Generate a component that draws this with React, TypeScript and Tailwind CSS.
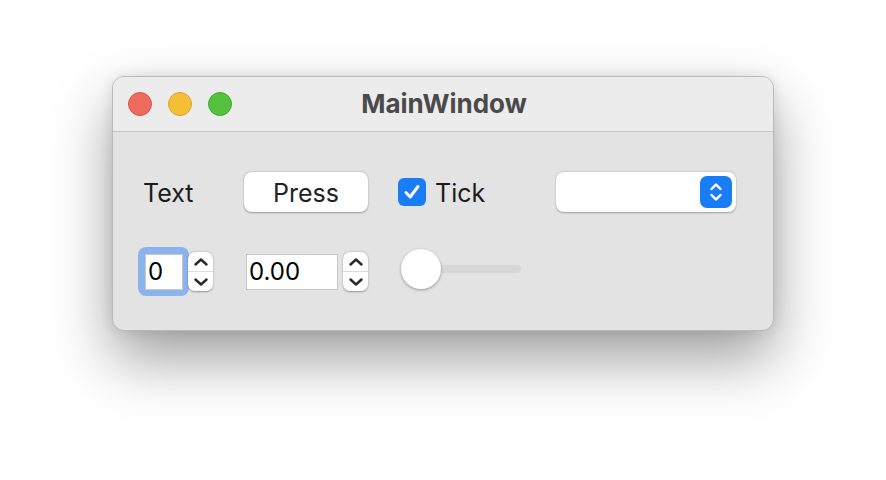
import React from 'react';

function Chevrons({ color = '#2b2b2b' }: { color?: string }) {
  return (
    <svg width="16" height="24" viewBox="0 0 16 24" fill="none">
      <path d="M3.5 9 L8 4.5 L12.5 9" stroke={color} strokeWidth="2.4" strokeLinecap="round" strokeLinejoin="round" />
      <path d="M3.5 15 L8 19.5 L12.5 15" stroke={color} strokeWidth="2.4" strokeLinecap="round" strokeLinejoin="round" />
    </svg>
  );
}

function Stepper() {
  return (
    <div className="w-[25px] h-[39px] bg-white rounded-[7px] shadow-[0_0.5px_2px_rgba(0,0,0,0.35)] flex flex-col items-center">
      <div className="flex-1 flex items-center">
        <svg width="16" height="10" viewBox="0 0 16 10" fill="none">
          <path d="M2.5 7.5 L8 2.5 L13.5 7.5" stroke="#2b2b2b" strokeWidth="2.5" strokeLinecap="round" strokeLinejoin="round" />
        </svg>
      </div>
      <div className="w-full h-px bg-[#dcdcdc]" />
      <div className="flex-1 flex items-center">
        <svg width="16" height="10" viewBox="0 0 16 10" fill="none">
          <path d="M2.5 2.5 L8 7.5 L13.5 2.5" stroke="#2b2b2b" strokeWidth="2.5" strokeLinecap="round" strokeLinejoin="round" />
        </svg>
      </div>
    </div>
  );
}

export default function App() {
  const font = { fontFamily: 'Inter, "Liberation Sans", Arial, sans-serif' };
  return (
    <div className="w-[886px] h-[480px] bg-white overflow-hidden pt-[76px] pl-[112px]" style={font}>
      <div className="w-[662px] h-[255px] rounded-[12px] border border-[#b9b9b9] bg-[#e3e3e3] overflow-hidden shadow-[0_28px_60px_rgba(0,0,0,0.38),0_0_14px_rgba(0,0,0,0.1)] flex flex-col">
        {/* Title bar */}
        <div className="h-[55px] bg-[#ececed] border-b border-[#c6c6c6] flex items-center relative">
          <div className="flex items-center gap-[16px] pl-[15px]">
            <span className="w-[24px] h-[24px] rounded-full bg-[#ee6a5e] border border-[#d5574c]" />
            <span className="w-[24px] h-[24px] rounded-full bg-[#f6be34] border border-[#dca22a]" />
            <span className="w-[24px] h-[24px] rounded-full bg-[#55c23e] border border-[#45a832]" />
          </div>
          <div className="absolute inset-0 flex items-center justify-center pointer-events-none">
            <span className="text-[26px] leading-none font-bold text-[#4a4a4a] pl-[2px]">MainWindow</span>
          </div>
        </div>

        {/* Content */}
        <div className="flex flex-col pt-[38px]">
          {/* Row 1 */}
          <div className="flex items-center h-[44px] pl-[30px]">
            <div className="w-[101px] text-[25px] leading-none text-[#1b1b1b] pt-[2px]">Text</div>
            <div className="w-[124px] h-[40px] bg-white rounded-[8px] shadow-[0_0.5px_2px_rgba(0,0,0,0.35)] flex items-center justify-center text-[25px] leading-none text-[#222] pt-[2px]">
              Press
            </div>
            <div className="ml-[30px] w-[28px] h-[28px] rounded-[6px] bg-[#1a7df8] flex items-center justify-center">
              <svg width="20" height="20" viewBox="0 0 20 20" fill="none">
                <path d="M4 10.5 L8.2 15 L16 4.5" stroke="white" strokeWidth="3" strokeLinecap="round" strokeLinejoin="round" />
              </svg>
            </div>
            <div className="ml-[9px] w-[121px] text-[25px] leading-none text-[#1b1b1b] pt-[2px]">Tick</div>
            <div className="w-[180px] h-[40px] bg-white rounded-[8px] shadow-[0_0.5px_2px_rgba(0,0,0,0.3)] flex items-center justify-end pr-[4px]">
              <div className="w-[32px] h-[32px] rounded-[7px] bg-[#1a7df8] flex items-center justify-center">
                <Chevrons color="white" />
              </div>
            </div>
          </div>

          {/* Row 2 */}
          <div className="flex items-center h-[49px] mt-[33px] pl-[25px]">
            <div className="w-[51px] h-[49px] rounded-[8px] bg-[#8bb4ee] flex items-center pl-[7px]">
              <div className="w-[38px] h-[36px] bg-white border border-[#c8c8c8] flex items-center pl-[2px] text-[24px] text-black">
                0
              </div>
            </div>
            <div className="-ml-[1px]">
              <Stepper />
            </div>
            <div className="ml-[33px] w-[92px] h-[36px] bg-white border border-[#c8c8c8] flex items-center pl-[2px] text-[24px] text-black">
              0.00
            </div>
            <div className="ml-[5px]">
              <Stepper />
            </div>
            <div className="ml-[33px] relative w-[120px] h-[40px] flex items-center -mt-[6px]">
              <div className="w-full h-[8px] rounded-full bg-[#d6d6d6]" />
              <div className="absolute left-0 top-0 w-[40px] h-[40px] rounded-full bg-white shadow-[0_1px_3px_rgba(0,0,0,0.35)]" />
            </div>
          </div>
        </div>
      </div>
    </div>
  );
}
